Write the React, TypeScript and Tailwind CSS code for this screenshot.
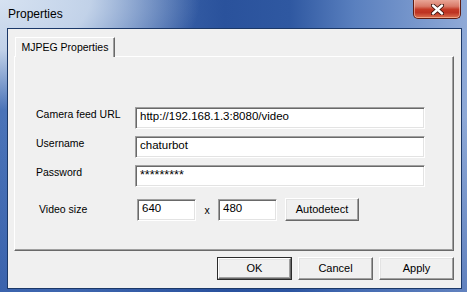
import React from "react";

const font = "font-['Liberation_Sans',Arial,sans-serif]";

function CloseButton() {
  return (
    <div className="w-[48px] h-[19px] rounded-b-[5px] border border-t-0 border-[#5e1c12] bg-[linear-gradient(180deg,#e9a596_0%,#d97a68_35%,#c43a26_52%,#bd3322_70%,#dc7352_100%)] shadow-[inset_0_-1px_0_rgba(255,200,170,0.6),inset_1px_0_0_rgba(255,220,210,0.5),inset_-1px_0_0_rgba(255,220,210,0.5)] flex items-center justify-center">
      <svg width="13" height="11" viewBox="0 0 13 11">
        <path d="M2 1.5 L11 9.5 M11 1.5 L2 9.5" stroke="#3b120c" strokeWidth="4.2" strokeLinecap="round" />
        <path d="M2 1.5 L11 9.5 M11 1.5 L2 9.5" stroke="#ffffff" strokeWidth="2.4" strokeLinecap="round" />
      </svg>
    </div>
  );
}

function TextBox({ value, width, small }: { value: string; width: string; small?: boolean }) {
  return (
    <div
      className={`${width} h-[22px] bg-white border border-t-[#a0a0a0] border-l-[#a0a0a0] border-b-white border-r-white shadow-[inset_1px_1px_0_#696969,inset_-1px_-1px_0_#e3e3e3] flex pl-[4px] text-black ${small ? "items-start pt-[3px] text-[12.5px] leading-[12px]" : "items-center pb-[2px] text-[11.5px]"}`}
    >
      {value}
    </div>
  );
}

function Button({ label, width, isDefault }: { label: string; width: string; isDefault?: boolean }) {
  const inner = (
    <div className="flex-1 h-full bg-[#f0f0f0] border border-t-white border-l-white border-b-[#696969] border-r-[#696969] shadow-[inset_-1px_-1px_0_#a0a0a0,inset_1px_1px_0_#e3e3e3] flex items-center justify-center text-[11px] text-black">
      {label}
    </div>
  );
  if (isDefault) {
    return <div className={`${width} h-[23px] border border-[#2b2b2b] flex`}>{inner}</div>;
  }
  return <div className={`${width} h-[23px] flex`}>{inner}</div>;
}

function FieldRow({ label, value, small }: { label: string; value: string; small?: boolean }) {
  return (
    <div className="flex items-start">
      <span className="w-[99px] leading-[14px] text-[10.5px] text-black">{label}</span>
      <TextBox value={value} width="w-[290px]" small={small} />
    </div>
  );
}

export default function App() {
  return (
    <div
      className={`w-[467px] h-[292px] flex flex-col ${font} bg-[radial-gradient(ellipse_200px_110px_at_0_0,#d6e2f1_0%,rgba(214,226,241,0.85)_45%,rgba(214,226,241,0)_100%),linear-gradient(180deg,rgba(0,0,0,0)_40%,rgba(40,80,160,0.45)_100%),linear-gradient(90deg,#4a73b8_0%,#5078ba_15%,#2a529c_48%,#2f58a1_62%,#5a80bf_76%,#90aad7_100%)]`}
    >
      {/* Title bar */}
      <div className="h-[28px] flex items-start justify-between pl-[8px] pr-[6px]">
        <span className="self-center text-[12px] text-black pb-[1px]">Properties</span>
        <CloseButton />
      </div>

      {/* Client area */}
      <div className="flex-1 ml-[7px] mr-[5px] mb-[3px] border border-[#1b3868] bg-[#f0f0f0] flex flex-col pt-[8px] pl-[6px] pr-[7px]">
        {/* Tab strip */}
        <div className="flex">
          <div className="ml-[1px] w-[100px] h-[20px] -mb-[1px] relative z-10 bg-[#f0f0f0] border border-b-0 border-t-white border-l-white border-r-[#696969] shadow-[inset_-1px_0_0_#a0a0a0] flex items-center justify-center text-[10.5px] text-black">
            MJPEG Properties
          </div>
        </div>

        {/* Tab panel */}
        <div className="h-[195px] border border-t-white border-l-white border-b-[#696969] border-r-[#696969] shadow-[inset_-1px_-1px_0_#a0a0a0] pt-[50px] pl-[21px] flex flex-col">
          <div className="flex flex-col gap-[7px]">
            <FieldRow label="Camera feed URL" value="http://192.168.1.3:8080/video" />
            <FieldRow label="Username" value="chaturbot" />
            <FieldRow label="Password" value="*********" small />
          </div>
          <div className="flex items-center mt-[11px]">
            <span className="ml-[3px] w-[98px] text-[10.5px] text-black">Video size</span>
            <TextBox value="640" width="w-[59px]" />
            <span className="w-[22px] text-center text-[10.5px] text-black pt-[3px]">x</span>
            <TextBox value="480" width="w-[59px]" />
            <div className="ml-[8px]">
              <Button label="Autodetect" width="w-[74px]" />
            </div>
          </div>
        </div>

        {/* Dialog buttons */}
        <div className="flex justify-end gap-[6px] mt-[6px]">
          <Button label="OK" width="w-[75px]" isDefault />
          <Button label="Cancel" width="w-[75px]" />
          <Button label="Apply" width="w-[75px]" />
        </div>
      </div>
    </div>
  );
}
